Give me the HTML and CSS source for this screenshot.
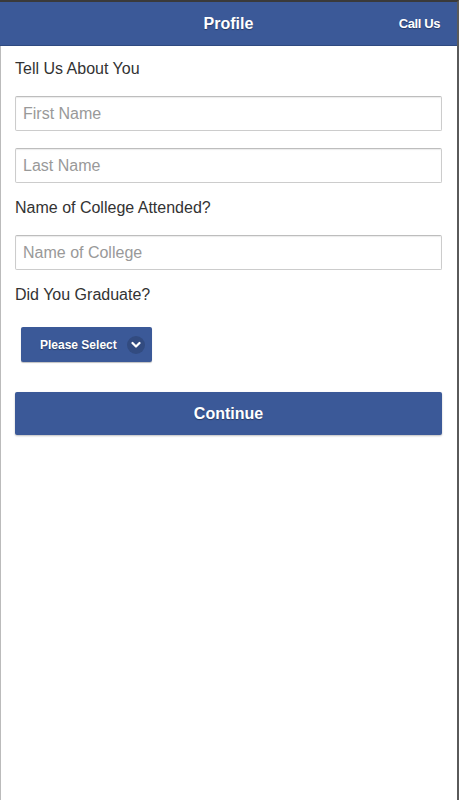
FILE: index.html
```html
<!DOCTYPE html>
<html>
<head>
<meta charset="utf-8">
<link rel="stylesheet" href="styles.css">
</head>
<body>
<div class="frame">
  <header class="topbar">
    <span class="title">Profile</span>
    <span class="call">Call Us</span>
  </header>
  <main class="content">
    <div class="label">Tell Us About You</div>
    <div class="field">First Name</div>
    <div class="field">Last Name</div>
    <div class="label">Name of College Attended?</div>
    <div class="field">Name of College</div>
    <div class="label">Did You Graduate?</div>
    <div class="select-row">
      <div class="select">
        <span class="select-text">Please Select</span>
        <span class="chev"><svg width="10" height="8" viewBox="0 0 10 8"><path d="M1.5 2 L5 5.5 L8.5 2" fill="none" stroke="#fff" stroke-width="2.2" stroke-linecap="round" stroke-linejoin="round"/></svg></span>
      </div>
    </div>
    <div class="continue">Continue</div>
  </main>
</div>
</body>
</html>
```
FILE: styles.css
```css
html, body {
  margin: 0;
  padding: 0;
  background: #fff;
}
body {
  font-family: "Liberation Sans", Arial, sans-serif;
  width: 460px;
  height: 800px;
  overflow: hidden;
}
.frame {
  width: 457px;
  height: 798px;
  border-top: 2px solid #3a3a3a;
  border-right: 2px solid #5a5a5a;
  box-shadow: 1px 0 0 #bbb inset;
  position: relative;
}
.topbar {
  height: 43px;
  background: #3b5998;
  border-bottom: 1px solid #2f4a80;
  display: flex;
  align-items: center;
  justify-content: center;
  position: relative;
  color: #fff;
  text-shadow: 0 1px 1px rgba(0,0,0,0.35);
}
.title {
  font-weight: bold;
  font-size: 16px;
}
.call {
  position: absolute;
  right: 17px;
  top: 14px;
  font-weight: bold;
  font-size: 13px;
  letter-spacing: -0.4px;
}
.content {
  padding: 13px 15px 0 15px;
  display: flex;
  flex-direction: column;
}
.label {
  font-size: 16px;
  color: #333;
  line-height: 20px;
  margin-bottom: 17px;
}
.field {
  width: 427px;
  height: 35px;
  box-sizing: border-box;
  border: 1px solid #ccc;
  border-top-color: #bdbdbd;
  box-shadow: inset 0 1px 1px rgba(0,0,0,0.08);
  border-radius: 2px;
  font-size: 16px;
  color: #999;
  padding-left: 7px;
  display: flex;
  align-items: center;
  margin-bottom: 15px;
}
.field + .field {
  margin-top: 2px;
}
.select-row {
  padding-left: 6px;
  margin-top: 5px;
}
.select {
  width: 131px;
  height: 35px;
  box-sizing: border-box;
  background: #3b5998;
  border-radius: 2px;
  box-shadow: 0 1px 1px rgba(0,0,0,0.25);
  display: flex;
  align-items: center;
  color: #fff;
  font-weight: bold;
  font-size: 12px;
  text-shadow: 0 1px 1px rgba(0,0,0,0.35);
}
.select-text {
  margin-left: 19px;
}
.chev {
  margin-left: 10px;
  width: 18px;
  height: 18px;
  border-radius: 50%;
  background: #324b80;
  display: flex;
  align-items: center;
  justify-content: center;
}
.continue {
  margin-top: 30px;
  width: 427px;
  height: 43px;
  background: #3b5998;
  border-radius: 2px;
  box-shadow: 0 1px 2px rgba(0,0,0,0.25);
  color: #fff;
  font-weight: bold;
  font-size: 16px;
  display: flex;
  align-items: center;
  justify-content: center;
  text-shadow: 0 1px 1px rgba(0,0,0,0.35);
}
```
